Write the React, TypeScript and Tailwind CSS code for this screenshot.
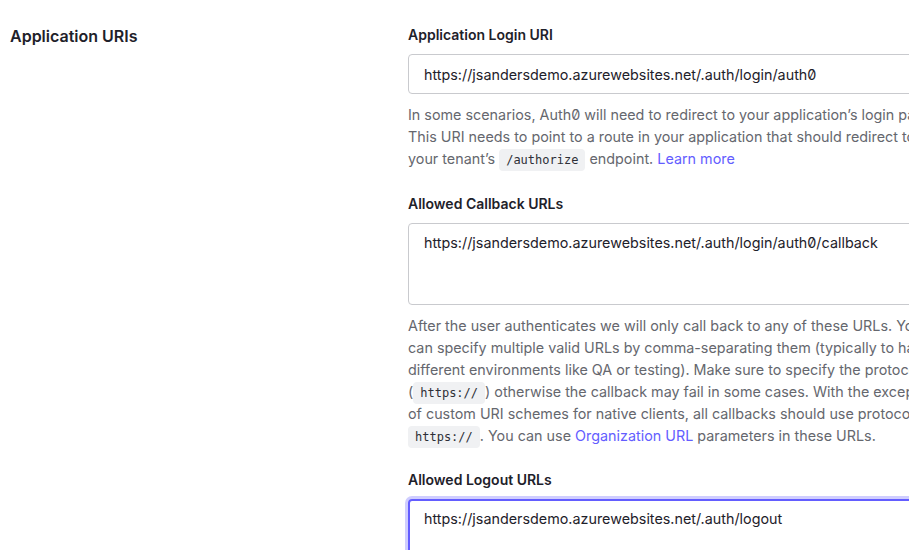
import React from 'react';

const Code = ({ children }: { children: React.ReactNode }) => (
  <code className="rounded-[4px] bg-[#f0f1f3] px-[7px] py-[4px] font-['DejaVu_Sans_Mono',monospace] text-[12px] leading-none text-[#2d2f36]">
    {children}
  </code>
);

const Label = ({ children }: { children: React.ReactNode }) => (
  <label className="mb-[9px] block text-[14px] font-semibold leading-5 text-[#1e212a]">{children}</label>
);

const Help = ({ children }: { children: React.ReactNode }) => (
  <p className="mt-[10px] text-[14.35px] leading-[22px] text-[#65676e]">{children}</p>
);

const App = () => {
  return (
    <div className="h-[550px] w-[909px] overflow-hidden bg-white font-['Inter',sans-serif] [font-feature-settings:'zero']">
      <div className="flex pt-[25px]">
        <div className="w-[408px] shrink-0 pl-[10px]">
          <h2 className="text-[16px] font-semibold leading-[22px] text-[#1e212a]">Application URIs</h2>
        </div>

        <div className="w-[540px] shrink-0">
          <div>
            <Label>Application Login URI</Label>
            <input
              readOnly
              value="https://jsandersdemo.azurewebsites.net/.auth/login/auth0"
              className="h-[40px] w-full rounded-[4px] border border-[#c9cace] px-[15px] text-[14.35px] text-[#1e212a] outline-none"
            />
            <Help>
              In some scenarios, Auth0 will need to redirect to your application’s login page. This URI needs to
              point to a route in your application that should redirect to your tenant’s <Code>/authorize</Code>{' '}
              endpoint. <a className="text-[#635dff]">Learn more</a>
            </Help>
          </div>

          <div className="mt-[24px]">
            <Label>Allowed Callback URLs</Label>
            <textarea
              readOnly
              value="https://jsandersdemo.azurewebsites.net/.auth/login/auth0/callback"
              className="block h-[82px] w-full resize-none rounded-[4px] border border-[#c9cace] px-[15px] pt-[9px] text-[14.35px] leading-5 text-[#1e212a] outline-none"
            />
            <Help>
              After the user authenticates we will only call back to any of these URLs. You can specify multiple
              valid URLs by comma-separating them (typically to handle different environments like QA or testing).
              Make sure to specify the protocol (<Code>https://</Code>) otherwise the callback may fail in some
              cases. With the exception of custom URI schemes for native clients, all callbacks should use protocol{' '}
              <Code>https://</Code>. You can use <a className="text-[#635dff]">Organization URL</a> parameters in
              these URLs.
            </Help>
          </div>

          <div className="mt-[23px]">
            <Label>Allowed Logout URLs</Label>
            <textarea
              readOnly
              value="https://jsandersdemo.azurewebsites.net/.auth/logout"
              className="block h-[82px] w-full resize-none rounded-[4px] border-2 border-[#635dff] px-[14px] pt-[8px] text-[14.35px] leading-5 text-[#1e212a] outline-none ring-[3px] ring-[#cfcdff]"
            />
          </div>
        </div>
      </div>
    </div>
  );
};

export default App;
